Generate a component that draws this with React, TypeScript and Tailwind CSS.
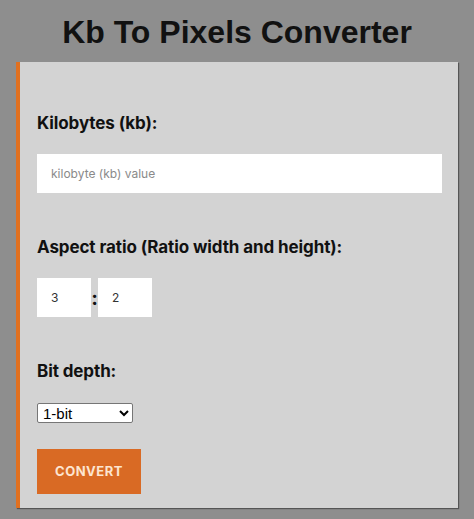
import React from "react";

export default function App() {
  return (
    <div className="min-h-[519px] w-[474px] bg-[#8e8e8e] pt-[12px] pb-[11px]">
      <h1 className="text-center text-[32px] leading-[40px] font-bold text-[#111] font-['Liberation_Sans',Arial,sans-serif]">
        Kb To Pixels Converter
      </h1>
      <div className="mx-[16px] mt-[10px] h-[446px] border-l-[4px] border-[#e07020] bg-[#d3d3d3] shadow-[1px_1px_1px_#555] pl-[17px] pr-[16px] pt-[49px] font-['Inter',sans-serif]">
        <label className="block text-[17px] font-bold leading-[24px] text-[#111] tracking-[-0.1px]">Kilobytes (kb):</label>
        <input
          className="mt-[19px] block h-[39px] w-[405px] bg-white px-[14px] text-[12px] text-[#333] placeholder:text-[#8a8a8a] outline-none"
          placeholder="kilobyte (kb) value"
        />
        <label className="mt-[42px] block text-[17px] font-bold leading-[24px] text-[#111] tracking-[-0.1px]">
          Aspect ratio (Ratio width and height):
        </label>
        <div className="mt-[19px] flex items-center">
          <input className="h-[39px] w-[54px] bg-white px-[14px] text-[12px] text-[#333] outline-none" defaultValue="3" />
          <span className="w-[7px] text-center text-[20px] font-bold leading-none text-[#111]">:</span>
          <input className="h-[39px] w-[54px] bg-white px-[14px] text-[12px] text-[#333] outline-none" defaultValue="2" />
        </div>
        <label className="mt-[42px] block text-[17px] font-bold leading-[24px] text-[#111] tracking-[-0.1px]">Bit depth:</label>
        <select className="mt-[20px] block h-[20px] w-[96px] border border-[#767676] bg-white pl-[1px] text-[15px] leading-[18px] text-black rounded-[2px] font-['Liberation_Sans',Arial,sans-serif]" defaultValue="1">
          <option value="1">1-bit</option>
          <option value="2">2-bit</option>
          <option value="4">4-bit</option>
          <option value="8">8-bit</option>
          <option value="16">16-bit</option>
          <option value="24">24-bit</option>
        </select>
        <button className="mt-[26px] block h-[45px] w-[104px] bg-[#d96a24] text-[13px] font-bold tracking-[0.5px] text-[#fde5d0]">
          CONVERT
        </button>
      </div>
    </div>
  );
}
